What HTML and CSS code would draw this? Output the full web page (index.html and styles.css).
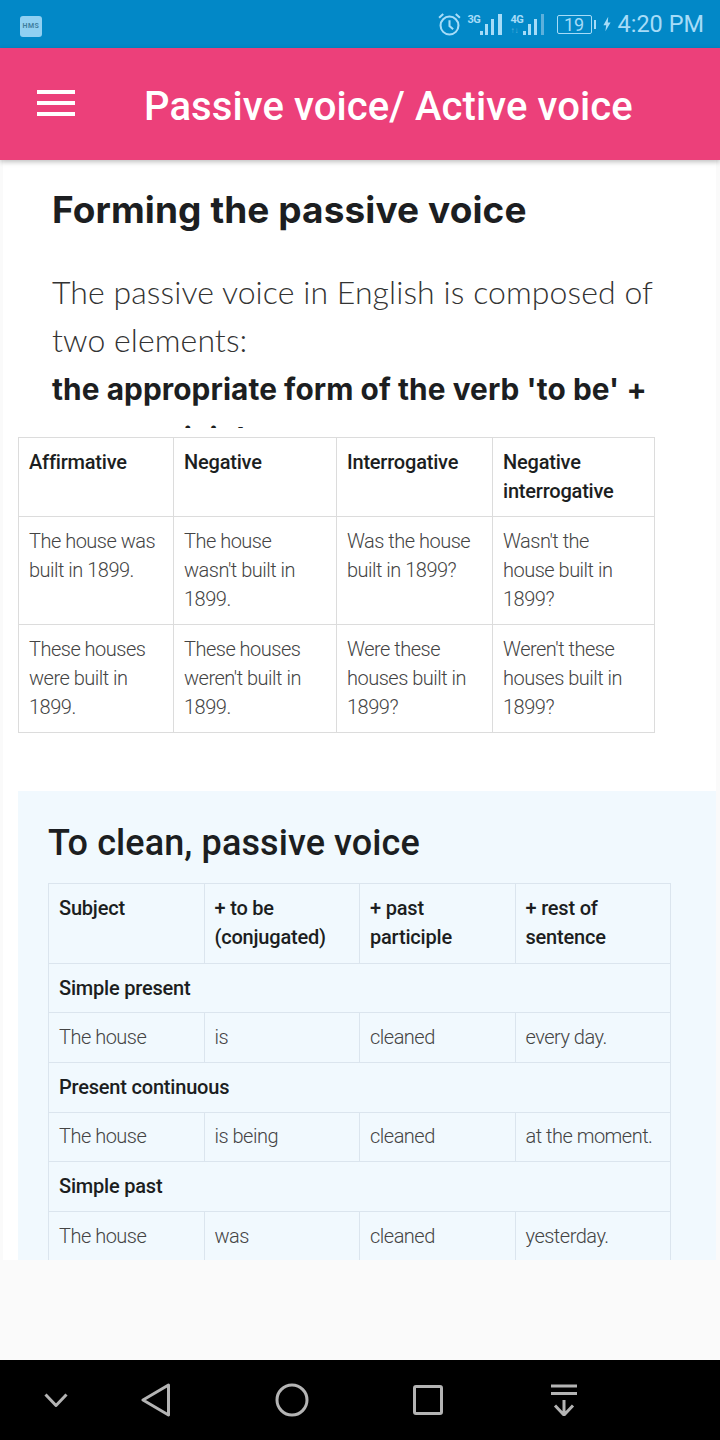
FILE: index.html
```html
<!DOCTYPE html>
<html lang="en">
<head>
  <meta charset="UTF-8">
  <meta name="viewport" content="width=device-width, initial-scale=1.0">
  <title>Passive voice/ Active voice</title>
  <link rel="stylesheet" href="styles.css">
</head>
<body>

  <!-- Status bar -->
  <div class="status">
    <div class="hms">HMS</div>
    <div class="status__right">
      <svg class="alarm" viewBox="0 0 24 24">
        <circle cx="12" cy="13" r="8.6"></circle>
        <path d="M12 8v5.500l3.500 3M2 5.500l4-3.500M22 5.500l-4-3.500"></path>
      </svg>
      <div class="signal">
        <span class="signal__label">3G</span>
        <svg viewBox="0 0 23 21"><path d="M0 21v-4h3v4zM5 21v-11h3v11zM11 21v-16h3v16zM18 21v-21h4v21z"></path></svg>
      </div>
      <div class="signal">
        <span class="signal__label">4G</span>
        <span class="signal__data">↑↓</span>
        <svg viewBox="0 0 23 21"><path d="M0 21v-4h3v4zM5 21v-11h3v11zM11 21v-16h3v16z"></path><path class="dim" d="M18 21v-21h3v21z"></path></svg>
      </div>
      <div class="battery">19</div>
      <div class="battery__tip"></div>
      <svg class="bolt" viewBox="0 0 10 18"><path d="M6.500 0L0.500 10.500h3.500L3 18l6.500-11H6z"></path></svg>
      <span class="clock">4:20 PM</span>
    </div>
  </div>

  <!-- App bar -->
  <div class="appbar">
    <div class="menu"><span></span><span></span><span></span></div>
    <div class="appbar__title">Passive voice/ Active voice</div>
  </div>

  <!-- Main Content -->
  <div class="content">
    <div class="intro">
      <h1>Forming the passive voice</h1>
      <p>The passive voice in English is composed of two elements:<br>
      <b>the appropriate form of the verb 'to be' + past participle</b></p>
    </div>

    <table class="forms">
      <tr>
        <th class="c1">Affirmative</th>
        <th class="c2">Negative</th>
        <th class="c3">Interrogative</th>
        <th class="c4">Negative interrogative</th>
      </tr>
      <tr>
        <td>The house was built in 1899.</td>
        <td>The house wasn't built in 1899.</td>
        <td>Was the house built in 1899?</td>
        <td>Wasn't the house built in 1899?</td>
      </tr>
      <tr>
        <td>These houses were built in 1899.</td>
        <td>These houses weren't built in 1899.</td>
        <td>Were these houses built in 1899?</td>
        <td>Weren't these houses built in 1899?</td>
      </tr>
    </table>

    <div class="box">
      <h2>To clean, passive voice</h2>
      <table class="clean">
        <tr>
          <th>Subject</th>
          <th>+ to be (conjugated)</th>
          <th>+ past participle</th>
          <th>+ rest of sentence</th>
        </tr>
        <tr><th colspan="4">Simple present</th></tr>
        <tr><td>The house</td><td>is</td><td>cleaned</td><td>every day.</td></tr>
        <tr><th colspan="4">Present continuous</th></tr>
        <tr><td>The house</td><td>is being</td><td>cleaned</td><td>at the moment.</td></tr>
        <tr><th colspan="4">Simple past</th></tr>
        <tr><td>The house</td><td>was</td><td>cleaned</td><td>yesterday.</td></tr>
      </table>
    </div>
  </div>

  <div class="blank"></div>

  <!-- Navigation bar -->
  <div class="navbar">
    <svg class="nav nav--down" viewBox="0 0 24 14"><path d="M1.500 1.500L12 12.500L22.500 1.500"></path></svg>
    <svg class="nav nav--back" viewBox="0 0 30 34"><path d="M27.500 2L2 17L27.500 32Z"></path></svg>
    <svg class="nav nav--home" viewBox="0 0 34 34"><circle cx="17" cy="17" r="15"></circle></svg>
    <svg class="nav nav--recent" viewBox="0 0 30 30"><rect x="1.500" y="1.500" width="27" height="27" rx="1.500"></rect></svg>
    <svg class="nav nav--pull" viewBox="0 0 28 32"><path d="M1 2h26M1 9.500h26M14 16v15M5 21.500L14 31L23 21.500"></path></svg>
  </div>

</body>
</html>
```

FILE: styles.css
```css
* {
  box-sizing: border-box;
}

body {
  margin: 0;
  background: #fafafa;
  font-family: Roboto, sans-serif;
  color: #1c1e21;
}

/* status bar */
.status {
  height: 48px;
  background: #0288c7;
  display: flex;
  align-items: center;
  justify-content: space-between;
  padding: 0 16px 0 20px;
}

.hms {
  width: 22px;
  height: 21px;
  margin-top: 4px;
  border-radius: 3px;
  background: #90d0f2;
  color: #3f7f9f;
  font-size: 7px;
  font-weight: 700;
  letter-spacing: 0.5px;
  line-height: 21px;
  text-align: center;
}

.status__right {
  display: flex;
  align-items: center;
  color: #a6dcf8;
}

.alarm {
  width: 25px;
  height: 25px;
  margin-right: 6px;
  fill: none;
  stroke: #a6dcf8;
  stroke-width: 2;
}

.signal {
  position: relative;
  width: 35px;
  height: 21px;
  margin-right: 8px;
}

.signal svg {
  position: absolute;
  right: 0;
  bottom: 0;
  width: 23px;
  height: 21px;
  fill: #a6dcf8;
}

.signal .dim {
  fill: #5cb0dc;
}

.signal__label {
  position: absolute;
  left: 0;
  top: -1px;
  font-size: 11px;
  font-weight: 700;
  letter-spacing: -0.5px;
}

.signal__data {
  position: absolute;
  left: 0;
  bottom: 0;
  font-size: 8px;
  line-height: 8px;
  color: #5cb0dc;
}

.battery {
  width: 35px;
  height: 19px;
  margin-left: 3px;
  border: 1px solid #a6dcf8;
  border-radius: 2px;
  font-size: 18px;
  line-height: 17px;
  text-align: center;
}

.battery__tip {
  width: 2px;
  height: 9px;
  margin-left: 2px;
  background: #a6dcf8;
}

.bolt {
  width: 8px;
  height: 16px;
  margin-left: 7px;
  fill: #a6dcf8;
}

.clock {
  margin-left: 7px;
  font-size: 23.500px;
}

/* app bar */
.appbar {
  position: relative;
  z-index: 2;
  height: 112px;
  background: #ec407a;
  box-shadow: 0 2px 5px rgba(0, 0, 0, 0.25);
  display: flex;
  align-items: center;
  padding: 4px 0 0 37px;
}

.menu {
  width: 38px;
  display: flex;
  flex-direction: column;
  gap: 7px;
  margin-top: -6px;
}

.menu span {
  height: 4px;
  background: #fff;
}

.appbar__title {
  margin-left: 69px;
  color: #fff;
  font-size: 40px;
  font-weight: 500;
  letter-spacing: 0.1px;
}

/* page content */
.content {
  height: 1100px;
  margin: 0 4px 0 3px;
  overflow: hidden;
  background: #fff;
}

.intro {
  height: 268px;
  overflow: hidden;
  padding: 26px 60px 0 49px;
}

h1 {
  margin: 0 0 34px;
  font-family: Inter, sans-serif;
  font-size: 37px;
  font-weight: 700;
  letter-spacing: 0.1px;
  line-height: 48px;
}

.intro p {
  margin: 0;
  font-family: Lato, sans-serif;
  font-size: 32px;
  font-weight: 300;
  letter-spacing: 0.08px;
  line-height: 48px;
  color: #333;
}

.intro b {
  font-family: Inter, sans-serif;
  font-size: 29.800px;
  font-weight: 700;
  color: #1c1e21;
}

table {
  border-collapse: collapse;
  table-layout: fixed;
  font-size: 20px;
  line-height: 29px;
}

th, td {
  border: 1px solid #dcdcdc;
  padding: 10px;
  text-align: left;
  vertical-align: top;
}

th {
  font-weight: 500;
  letter-spacing: -0.2px;
}

td {
  font-weight: 300;
  letter-spacing: -0.5px;
  color: #444;
}

.forms {
  width: 636px;
  margin: 9px 0 0 15px;
}

.forms td:last-child {
  padding-right: 16px;
}

.c1 { width: 155px; }
.c2 { width: 163px; }
.c3 { width: 156px; }
.c4 { width: 162px; }

.box {
  width: 698px;
  height: 480px;
  margin: 58px 0 0 15px;
  padding: 27px 30px 0;
  background: #f1f9fe;
}

h2 {
  margin: 0 0 15px;
  font-size: 36px;
  font-weight: 500;
  letter-spacing: 0.1px;
  line-height: 50px;
}

.clean {
  width: 623px;
}

.clean th, .clean td {
  border-color: #dbe5ee;
  padding: 9.800px 10px;
}

.clean tr:first-child th {
  padding-bottom: 11px;
}

.blank {
  height: 100px;
}

/* navigation bar */
.navbar {
  height: 80px;
  background: #000;
  display: flex;
  align-items: center;
}

.nav {
  fill: none;
  stroke: #b4b4b4;
  stroke-width: 3;
  stroke-linejoin: round;
}

.nav--down {
  width: 24px;
  height: 14px;
  margin-left: 44px;
}

.nav--back {
  width: 30px;
  height: 34px;
  margin-left: 73px;
}

.nav--home {
  width: 34px;
  height: 34px;
  margin-left: 104px;
}

.nav--recent {
  width: 30px;
  height: 30px;
  margin-left: 104px;
}

.nav--pull {
  width: 28px;
  height: 32px;
  margin-left: 107px;
}
```
